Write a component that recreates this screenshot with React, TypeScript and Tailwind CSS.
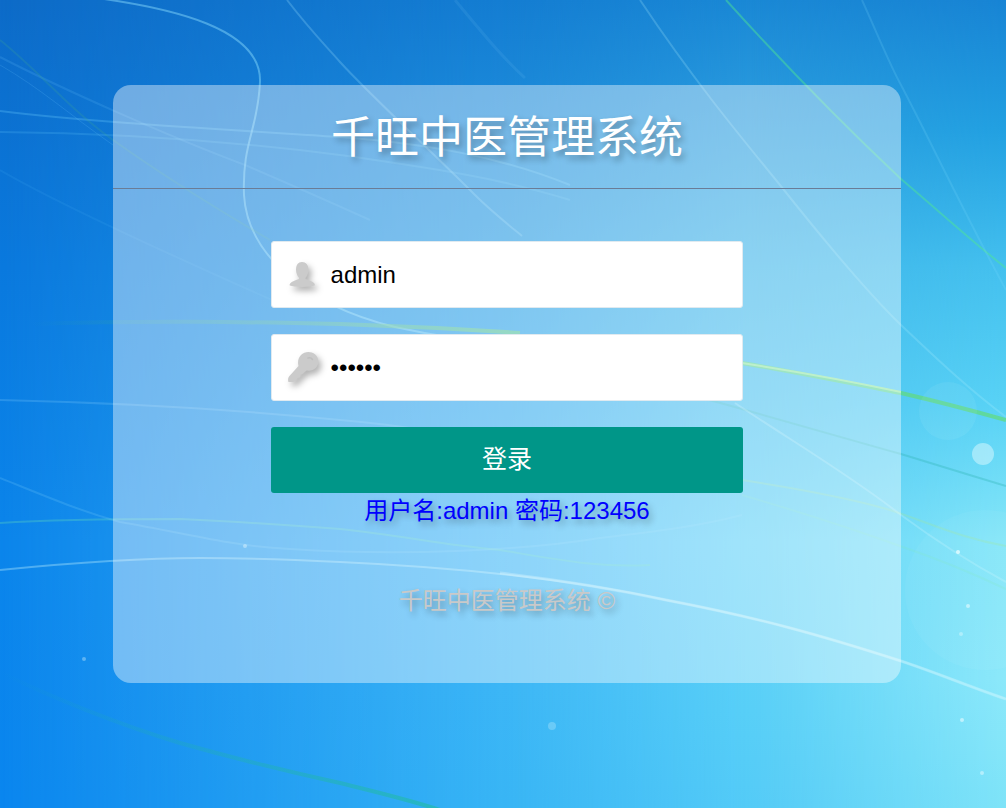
import React from 'react';

const columns = [
  { id: 'left', x1: '0', x2: '0', stops: [[0, '#0d6bc8'], [33, '#0a79de'], [67, '#0b85eb'], [100, '#0a86ef']] },
  { id: 'middle', x1: '0', x2: '503', stops: [[0, '#147dd2'], [33, '#269de5'], [67, '#41b7f7'], [100, '#38b5f5']] },
  { id: 'right', x1: '503', x2: '750', stops: [[0, '#1a88d5'], [33, '#3fb6ea'], [67, '#61d2f8'], [88, '#58cff7'], [100, '#54cbf7']] },
  { id: 'edge', x1: '750', x2: '1006', stops: [[0, '#1884d4'], [16, '#22a0e1'], [33, '#44c0ee'], [50, '#58d2f5'], [67, '#86e6f8'], [84, '#8ce8fa'], [100, '#7ee3f8']] },
];

const curves = [
  { d: 'M97 -2C170 8 262 28 260 82C258 130 242 142 244 195C247 250 300 304 395 327C440 337 480 342 520 345', color: '#8fe0ff', opacity: 0.45, width: 2 },
  { d: 'M287 0C310 30 325 45 340 62C370 95 430 150 475 195C490 210 505 222 522 236', color: '#9fe4ff', opacity: 0.25, width: 2 },
  { d: 'M0 111C80 121 200 128 340 137C430 144 500 157 570 185', color: '#6fd0ff', opacity: 0.28, width: 2 },
  { d: 'M0 132C110 133 230 141 340 155C430 168 500 178 570 200', color: '#6fd0ff', opacity: 0.18, width: 2 },
  { d: 'M0 57C60 88 170 137 245 165C280 180 310 193 370 220', color: '#6fc8ff', opacity: 0.16, width: 2 },
  { d: 'M0 65C40 88 70 115 113 145', color: '#6fc8ff', opacity: 0.18, width: 1 },
  { d: 'M0 40C40 72 70 110 113 140C165 177 210 205 270 240', color: '#3fa890', opacity: 0.22, width: 2 },
  { d: 'M0 170C60 205 170 255 290 308', color: '#5fc0ff', opacity: 0.1, width: 2 },
  { d: 'M455 0C480 30 500 55 525 78', color: '#8fdcff', opacity: 0.1, width: 3 },
  { d: 'M726 0C800 82 865 145 901 179C940 212 970 240 1006 268', color: '#4fe890', opacity: 0.45, width: 2 },
  { d: 'M640 0C690 75 735 130 780 185C830 248 870 295 901 325C940 362 970 390 1006 417', color: '#b0f0ff', opacity: 0.22, width: 2 },
  { d: 'M862 0C880 40 890 65 901 85C930 140 960 205 1006 290', color: '#80e0ff', opacity: 0.18, width: 2 },
  { d: 'M742 363C800 373 850 383 901 393C940 402 970 410 1006 420', color: '#62dc70', opacity: 0.65, width: 4 },
  { d: 'M742 363C800 372 850 381 901 392', color: '#c0f8b0', opacity: 0.55, width: 2 },
  { d: 'M650 385C680 392 710 400 742 409C800 425 850 440 901 454C940 466 970 475 1006 486', color: '#30b5b5', opacity: 0.35, width: 2 },
  { d: 'M0 400C120 403 230 409 340 420C400 425 460 434 500 450', color: '#90d8ff', opacity: 0.22, width: 2 },
  { d: 'M0 523C60 519 120 519 180 519C240 522 290 525 340 529C400 535 440 545 500 550C560 560 600 568 650 565', color: '#68e0b8', opacity: 0.3, width: 2 },
  { d: 'M0 478C50 498 80 511 120 522C190 534 230 546 290 549C400 556 520 551 600 538C660 531 700 526 742 515', color: '#90e0ff', opacity: 0.18, width: 2 },
  { d: 'M0 570C70 563 140 558 200 558C250 558 300 560 340 562C450 567 560 577 666 600C760 618 820 635 901 661C940 674 970 687 1006 699', color: '#c8f6ff', opacity: 0.35, width: 2 },
  { d: 'M500 573C560 580 610 588 666 600C760 618 820 635 901 661C940 674 970 687 1006 699', color: '#d8faff', opacity: 0.3, width: 3 },
  { d: 'M742 480C800 489 850 498 890 510C930 523 960 538 1006 546', color: '#a0e8a0', opacity: 0.3, width: 2 },
  { d: 'M735 403C790 440 850 475 901 515C935 540 965 560 1006 582', color: '#d0f8ff', opacity: 0.25, width: 2 },
  { d: 'M742 495C800 512 850 528 900 546C935 558 970 572 1006 589', color: '#80e8c0', opacity: 0.22, width: 2 },
];

const dots = [
  { x: 983, y: 454, r: 11, opacity: 0.45 },
  { x: 948, y: 411, r: 29, opacity: 0.07 },
  { x: 985, y: 590, r: 80, opacity: 0.05 },
  { x: 958, y: 552, r: 2, opacity: 0.8 },
  { x: 968, y: 606, r: 2, opacity: 0.6 },
  { x: 961, y: 634, r: 2, opacity: 0.4 },
  { x: 962, y: 720, r: 2, opacity: 0.6 },
  { x: 982, y: 773, r: 2, opacity: 0.5 },
  { x: 84, y: 659, r: 2, opacity: 0.35 },
  { x: 245, y: 546, r: 2, opacity: 0.4 },
  { x: 552, y: 726, r: 4, opacity: 0.25 },
];

function Wallpaper() {
  return (
    <svg className="absolute inset-0 -z-10 h-full w-full" viewBox="0 0 1006 808" preserveAspectRatio="none" fill="none" aria-hidden="true">
      <defs>
        {columns.map((col) => (
          <React.Fragment key={col.id}>
            <linearGradient id={`${col.id}-color`} x1="0" y1="0" x2="0" y2="1">
              {col.stops.map(([offset, color]) => (
                <stop key={offset} offset={`${offset}%`} stopColor={String(color)} />
              ))}
            </linearGradient>
            <linearGradient id={`${col.id}-fade`} gradientUnits="userSpaceOnUse" x1={col.x1} y1="0" x2={col.x2} y2="0">
              <stop offset="0" stopColor="#fff" stopOpacity={col.id === 'left' ? 1 : 0} />
              <stop offset="1" stopColor="#fff" />
            </linearGradient>
            <mask id={`${col.id}-mask`} maskUnits="userSpaceOnUse" x="0" y="0" width="1006" height="808">
              <rect width="1006" height="808" fill={`url(#${col.id}-fade)`} />
            </mask>
          </React.Fragment>
        ))}
        <linearGradient id="green-ray" gradientUnits="userSpaceOnUse" x1="30" y1="0" x2="500" y2="0">
          <stop offset="0" stopColor="#40b080" stopOpacity="0" />
          <stop offset="1" stopColor="#60cc80" stopOpacity="0.7" />
        </linearGradient>
        <linearGradient id="low-ray" gradientUnits="userSpaceOnUse" x1="0" y1="0" x2="440" y2="0">
          <stop offset="0" stopColor="#20b0a0" stopOpacity="0" />
          <stop offset="1" stopColor="#20bca0" stopOpacity="0.6" />
        </linearGradient>
      </defs>
      {columns.map((col) => (
        <rect key={col.id} width="1006" height="808" fill={`url(#${col.id}-color)`} mask={`url(#${col.id}-mask)`} />
      ))}
      {curves.map((curve) => (
        <path key={curve.d} d={curve.d} stroke={curve.color} strokeOpacity={curve.opacity} strokeWidth={curve.width} />
      ))}
      <path d="M30 324C150 320 250 322 340 324C400 326 460 329 520 333" stroke="url(#green-ray)" strokeWidth="4" />
      <path d="M0 672C50 697 120 725 180 743C240 760 290 772 340 783C380 793 410 800 440 810" stroke="url(#low-ray)" strokeWidth="4" />
      {dots.map((dot) => (
        <circle key={`${dot.x}-${dot.y}`} cx={dot.x} cy={dot.y} r={dot.r} fill="#e8fcff" fillOpacity={dot.opacity} />
      ))}
    </svg>
  );
}

const iconClass = 'pointer-events-none absolute left-4 top-4 h-9 w-9 drop-shadow-[3px_4px_3px_rgba(0,0,0,0.3)]';

function UserIcon() {
  return (
    <svg className={iconClass} viewBox="0 0 36 36" fill="#cbcbcb" aria-hidden="true">
      <path d="M15 5c4 0 6.500 3 6.500 7.500 0 3.500-1.300 6.300-3 8.300v1.200c3 1.200 6.500 2 8.500 4 .8.900 1 2 .7 2.600C25 29.300 21 30 15 30S5 29.300 2.800 28.600C2.400 27.800 2.800 26.800 3.500 26c2-2 5.500-2.800 8.500-4v-1.200c-1.700-2-3-4.800-3-8.300C9 8 11 5 15 5z" />
    </svg>
  );
}

function KeyIcon() {
  return (
    <svg className={iconClass} viewBox="0 0 36 36" aria-hidden="true">
      <path d="M14 5c3.500-3.800 10-4 14-.8 4 3.500 4.500 9.500 1 13.500-2.500 2.700-6 3.300-9.500 2.800l-4 3.500-2 .3-.5 3-3 .7-1 2.700L6 32H1.500c-.8-2-.5-4 .5-5.500L11.500 16C10.500 12 11 8.300 14 5z" fill="#cbcbcb" />
      <path d="M21 8c2-.5 3.500 0 4.500 1.500" stroke="#bebebe" strokeWidth="1.500" strokeLinecap="round" fill="none" />
    </svg>
  );
}

const inputClass =
  'block h-[67px] w-full rounded-[3px] border border-[#e0eaf0] bg-white pl-[59px] pr-4 text-2xl text-black focus:outline-none';

export default function App() {
  return (
    <main className="relative isolate min-h-screen overflow-hidden bg-[#0a84ea] pt-[85px] pr-[105px] pb-10 pl-[113px] text-2xl [font-family:'Liberation_Sans','Noto_Sans_CJK_SC',sans-serif]">
      <Wallpaper />
      <section className="rounded-[18px] bg-white/40 pb-16">
        <header className="border-b border-[#6a7c96] pt-[21px] pb-[19px] text-center">
          <h1 className="text-[44px] leading-[63px] text-white [text-shadow:3px_4px_6px_rgba(0,0,0,0.3)]">千旺中医管理系统</h1>
        </header>
        <form className="mx-auto mt-[52px] w-3/5" onSubmit={(e) => e.preventDefault()}>
          <div className="relative mb-[26px]">
            <UserIcon />
            <input className={inputClass} type="text" name="username" aria-label="用户名" defaultValue="admin" />
          </div>
          <div className="relative mb-[26px]">
            <KeyIcon />
            <input className={inputClass} type="password" name="password" aria-label="密码" defaultValue="123456" />
          </div>
          <button type="submit" className="block h-[66px] w-full rounded-[3px] bg-[#009688] text-[25px] text-white hover:opacity-80">
            登录
          </button>
          <p className="text-center leading-9 text-[#0000ff] [text-shadow:3px_4px_6px_rgba(0,0,0,0.3)]">用户名:admin 密码:123456</p>
        </form>
        <footer className="mt-[54px] text-center leading-9 text-[#c9c9c9] [text-shadow:3px_4px_6px_rgba(0,0,0,0.3)]">
          千旺中医管理系统 ©
        </footer>
      </section>
    </main>
  );
}
